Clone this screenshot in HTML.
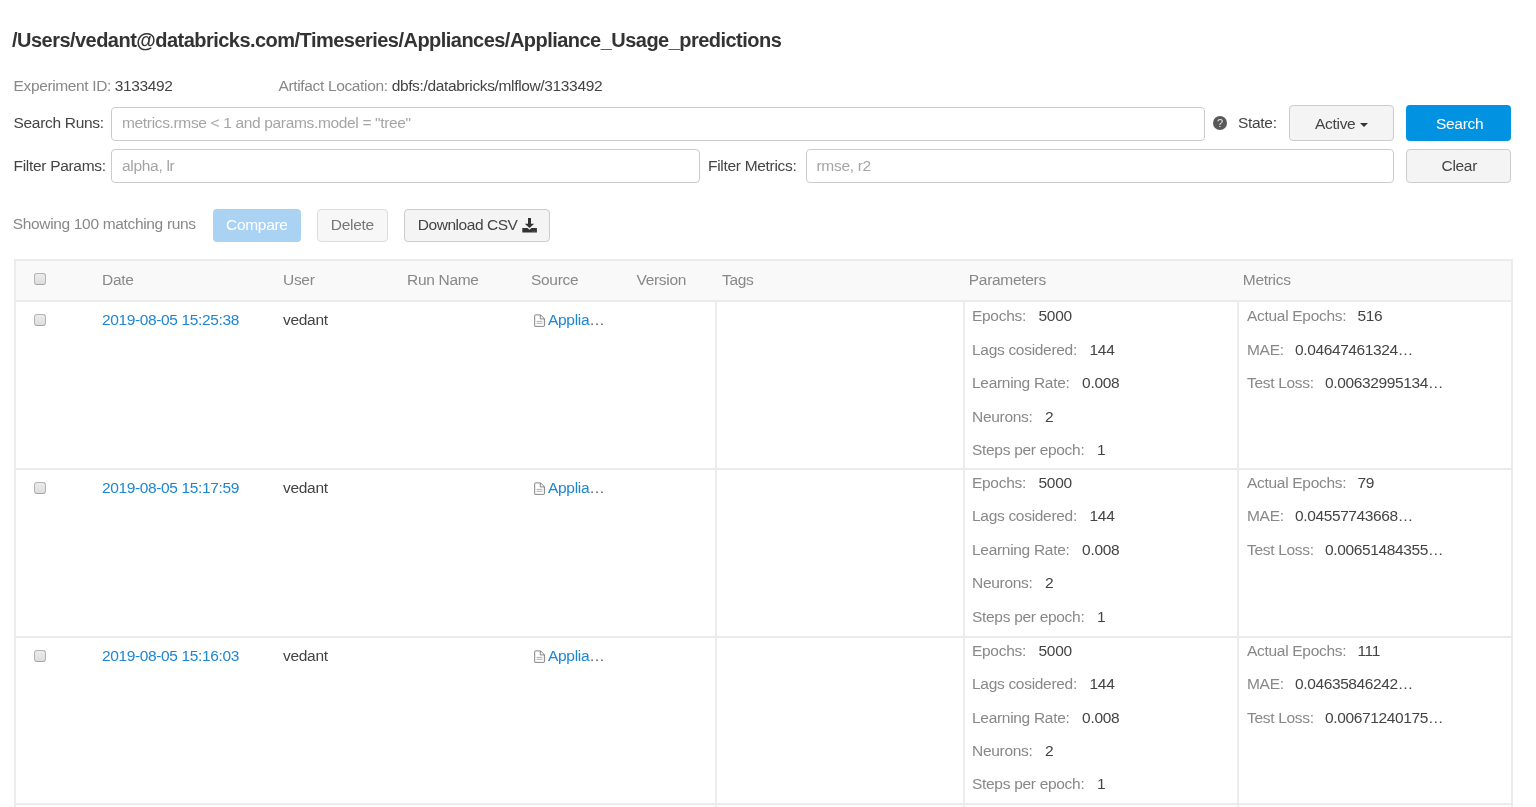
<!DOCTYPE html>
<html><head><meta charset="utf-8"><style>
*{margin:0;padding:0;box-sizing:border-box}
html,body{width:1536px;height:807px;overflow:hidden;background:#fff}
body{will-change:transform;font-family:"Liberation Sans",sans-serif;color:#333;position:relative}
.t{position:absolute;white-space:nowrap;font-size:15.50px;letter-spacing:-0.30px;line-height:17px}
.g{color:#888}
.d{color:#444}
.ph{color:#a5a5a5}
.lk{color:#1d86d2}
.box{position:absolute;border:1px solid #ccc;border-radius:4px;background:#fff}
.btn{position:absolute;border:1px solid #ccc;border-radius:4px;background:#f4f4f4}
.hl{position:absolute;height:2px;background:#ebebeb}
.vl{position:absolute;width:2px;background:#ececec}
.cb{position:absolute;width:12px;height:12px;border:1px solid #b4b4b4;border-bottom-color:#a4a4a4;border-radius:3px;background:linear-gradient(#ececec,#dddddd)}
</style></head><body>
<div style="position:absolute;left:12px;top:28.5px;font-size:20px;line-height:22px;letter-spacing:-0.53px;font-weight:bold;color:#333;white-space:nowrap">/Users/vedant@databricks.com/Timeseries/Appliances/Appliance_Usage_predictions</div>
<div class="t " style="left:13.60px;top:76.63px;letter-spacing:-0.37px"><span class="g">Experiment ID:</span> <span class="d">3133492</span></div>
<div class="t " style="left:278.50px;top:76.63px;letter-spacing:-0.35px"><span class="g">Artifact Location:</span> <span class="d">dbfs:/databricks/mlflow/3133492</span></div>
<div class="t d" style="left:13.50px;top:114.43px;">Search Runs:</div>
<div class="box" style="left:111px;top:107px;width:1093.5px;height:33.5px"></div>
<div class="t ph" style="left:122.00px;top:113.53px;letter-spacing:-0.34px">metrics.rmse &lt; 1 and params.model = "tree"</div>
<div style="position:absolute;left:1213px;top:116px;width:14px;height:14px;border-radius:50%;background:#585858;color:#e6e6e6;font-size:11px;line-height:15px;text-align:center;font-weight:normal">?</div>
<div class="t d" style="left:1238.00px;top:114.03px;">State:</div>
<div class="btn" style="left:1289px;top:105px;width:105px;height:35.5px"></div>
<div class="t d" style="left:1315.00px;top:114.93px;">Active</div>
<div style="position:absolute;left:1359.5px;top:122.5px;width:0;height:0;border-left:4px solid transparent;border-right:4px solid transparent;border-top:4px solid #333"></div>
<div style="position:absolute;left:1406px;top:105px;width:105px;height:35.5px;border-radius:4px;background:#0193e1"></div>
<div class="t " style="left:1436.00px;top:114.83px;color:#fff">Search</div>
<div class="t d" style="left:13.50px;top:156.73px;">Filter Params:</div>
<div class="box" style="left:111px;top:149px;width:589px;height:33.5px"></div>
<div class="t ph" style="left:122.00px;top:156.73px;">alpha, lr</div>
<div class="t d" style="left:708.00px;top:156.73px;">Filter Metrics:</div>
<div class="box" style="left:806px;top:149px;width:588px;height:33.5px"></div>
<div class="t ph" style="left:816.50px;top:156.73px;">rmse, r2</div>
<div class="btn" style="left:1406px;top:149px;width:105px;height:33.5px"></div>
<div class="t d" style="left:1441.50px;top:156.53px;">Clear</div>
<div class="t g" style="left:12.70px;top:215.33px;letter-spacing:-0.33px">Showing 100 matching runs</div>
<div style="position:absolute;left:213px;top:208.7px;width:88px;height:33.5px;border-radius:4px;background:#aad3f3"></div>
<div class="t " style="left:226.00px;top:216.33px;color:#fff">Compare</div>
<div class="btn" style="left:317px;top:208.7px;width:70.5px;height:33.5px;background:#f7f7f7;border-color:#ddd"></div>
<div class="t " style="left:330.80px;top:216.33px;color:#777">Delete</div>
<div class="btn" style="left:404px;top:208.7px;width:146px;height:33.5px"></div>
<div class="t d" style="left:417.80px;top:216.33px;letter-spacing:-0.46px">Download CSV</div>
<svg style="position:absolute;left:522px;top:218px" width="15" height="15" viewBox="0 0 15 15"><path d="M6 0h3v5.8h3.2L7.5 10 2.8 5.8H6z" fill="#333"/><path d="M0.3 10.1h5.2l2 1.6 2-1.6h5.4v4.5H0.3z" fill="#333"/><path d="M10.5 13.3h0.8M12.3 13.3h0.8" stroke="#888" stroke-width="0.8"/></svg>
<div style="position:absolute;left:14px;top:259px;width:1498px;height:41.5px;background:#f9f9f9"></div>
<div class="hl" style="left:14px;top:259px;width:1498px"></div>
<div class="hl" style="left:14px;top:300px;width:1498px"></div>
<div class="vl" style="left:14px;top:259px;height:548px"></div>
<div class="vl" style="left:1511px;top:259px;height:548px"></div>
<div class="cb" style="left:34px;top:273px"></div>
<div class="t g" style="left:102.00px;top:271.23px;">Date</div>
<div class="t g" style="left:283.00px;top:271.23px;">User</div>
<div class="t g" style="left:407.00px;top:271.23px;">Run Name</div>
<div class="t g" style="left:531.00px;top:271.23px;">Source</div>
<div class="t g" style="left:636.50px;top:271.23px;">Version</div>
<div class="t g" style="left:722.00px;top:271.23px;">Tags</div>
<div class="t g" style="left:968.80px;top:271.23px;">Parameters</div>
<div class="t g" style="left:1242.80px;top:271.23px;">Metrics</div>
<div class="vl" style="left:715px;top:301px;height:506px"></div>
<div class="vl" style="left:963px;top:301px;height:506px"></div>
<div class="vl" style="left:1237px;top:301px;height:506px"></div>
<div class="cb" style="left:34px;top:314.20px"></div>
<div class="t lk" style="left:102.00px;top:311.43px;letter-spacing:-0.37px">2019-08-05 15:25:38</div>
<div class="t d" style="left:283.00px;top:311.43px;">vedant</div>
<svg style="position:absolute;left:534px;top:313.80px" width="12" height="14" viewBox="0 0 12 14"><path d="M1.2 0.9H6.6L10.4 4.7V11.9Q10.4 12.4 9.9 12.4H1.2Q0.7 12.4 0.7 11.9V1.4Q0.7 0.9 1.2 0.9z" fill="none" stroke="#777" stroke-width="0.9"/><path d="M6.3 1V4.9H10.3" fill="none" stroke="#777" stroke-width="0.9"/><path d="M2.6 7.4H8.4M2.6 9.3H8.4" stroke="#999" stroke-width="0.8"/></svg>
<div class="t " style="left:548.00px;top:311.43px;"><span class="lk">Applia</span><span style="color:#555">…</span></div>
<div class="t " style="left:972.00px;top:307.33px;"><span class="g">Epochs:</span><span class="d" style="margin-left:12.6px">5000</span></div>
<div class="t " style="left:972.00px;top:340.73px;"><span class="g">Lags cosidered:</span><span class="d" style="margin-left:12.6px">144</span></div>
<div class="t " style="left:972.00px;top:374.13px;"><span class="g">Learning Rate:</span><span class="d" style="margin-left:12.6px">0.008</span></div>
<div class="t " style="left:972.00px;top:407.53px;"><span class="g">Neurons:</span><span class="d" style="margin-left:12.6px">2</span></div>
<div class="t " style="left:972.00px;top:440.93px;"><span class="g">Steps per epoch:</span><span class="d" style="margin-left:12.6px">1</span></div>
<div class="t " style="left:1247.00px;top:307.33px;"><span class="g">Actual Epochs:</span><span class="d" style="margin-left:11.3px;letter-spacing:-0.38px">516</span></div>
<div class="t " style="left:1247.00px;top:340.73px;"><span class="g">MAE:</span><span class="d" style="margin-left:11.3px;letter-spacing:-0.38px">0.04647461324…</span></div>
<div class="t " style="left:1247.00px;top:374.13px;"><span class="g">Test Loss:</span><span class="d" style="margin-left:11.3px;letter-spacing:-0.38px">0.00632995134…</span></div>
<div class="hl" style="left:14px;top:468.00px;width:1498px"></div>
<div class="vl" style="left:715px;top:469px;height:338px"></div>
<div class="vl" style="left:963px;top:469px;height:338px"></div>
<div class="vl" style="left:1237px;top:469px;height:338px"></div>
<div class="cb" style="left:34px;top:481.80px"></div>
<div class="t lk" style="left:102.00px;top:479.43px;letter-spacing:-0.37px">2019-08-05 15:17:59</div>
<div class="t d" style="left:283.00px;top:479.43px;">vedant</div>
<svg style="position:absolute;left:534px;top:481.80px" width="12" height="14" viewBox="0 0 12 14"><path d="M1.2 0.9H6.6L10.4 4.7V11.9Q10.4 12.4 9.9 12.4H1.2Q0.7 12.4 0.7 11.9V1.4Q0.7 0.9 1.2 0.9z" fill="none" stroke="#777" stroke-width="0.9"/><path d="M6.3 1V4.9H10.3" fill="none" stroke="#777" stroke-width="0.9"/><path d="M2.6 7.4H8.4M2.6 9.3H8.4" stroke="#999" stroke-width="0.8"/></svg>
<div class="t " style="left:548.00px;top:479.43px;"><span class="lk">Applia</span><span style="color:#555">…</span></div>
<div class="t " style="left:972.00px;top:473.93px;"><span class="g">Epochs:</span><span class="d" style="margin-left:12.6px">5000</span></div>
<div class="t " style="left:972.00px;top:507.33px;"><span class="g">Lags cosidered:</span><span class="d" style="margin-left:12.6px">144</span></div>
<div class="t " style="left:972.00px;top:540.73px;"><span class="g">Learning Rate:</span><span class="d" style="margin-left:12.6px">0.008</span></div>
<div class="t " style="left:972.00px;top:574.13px;"><span class="g">Neurons:</span><span class="d" style="margin-left:12.6px">2</span></div>
<div class="t " style="left:972.00px;top:607.53px;"><span class="g">Steps per epoch:</span><span class="d" style="margin-left:12.6px">1</span></div>
<div class="t " style="left:1247.00px;top:473.93px;"><span class="g">Actual Epochs:</span><span class="d" style="margin-left:11.3px;letter-spacing:-0.38px">79</span></div>
<div class="t " style="left:1247.00px;top:507.33px;"><span class="g">MAE:</span><span class="d" style="margin-left:11.3px;letter-spacing:-0.38px">0.04557743668…</span></div>
<div class="t " style="left:1247.00px;top:540.73px;"><span class="g">Test Loss:</span><span class="d" style="margin-left:11.3px;letter-spacing:-0.38px">0.00651484355…</span></div>
<div class="hl" style="left:14px;top:636.00px;width:1498px"></div>
<div class="vl" style="left:715px;top:637px;height:170px"></div>
<div class="vl" style="left:963px;top:637px;height:170px"></div>
<div class="vl" style="left:1237px;top:637px;height:170px"></div>
<div class="cb" style="left:34px;top:649.60px"></div>
<div class="t lk" style="left:102.00px;top:647.23px;letter-spacing:-0.37px">2019-08-05 15:16:03</div>
<div class="t d" style="left:283.00px;top:647.23px;">vedant</div>
<svg style="position:absolute;left:534px;top:649.60px" width="12" height="14" viewBox="0 0 12 14"><path d="M1.2 0.9H6.6L10.4 4.7V11.9Q10.4 12.4 9.9 12.4H1.2Q0.7 12.4 0.7 11.9V1.4Q0.7 0.9 1.2 0.9z" fill="none" stroke="#777" stroke-width="0.9"/><path d="M6.3 1V4.9H10.3" fill="none" stroke="#777" stroke-width="0.9"/><path d="M2.6 7.4H8.4M2.6 9.3H8.4" stroke="#999" stroke-width="0.8"/></svg>
<div class="t " style="left:548.00px;top:647.23px;"><span class="lk">Applia</span><span style="color:#555">…</span></div>
<div class="t " style="left:972.00px;top:641.73px;"><span class="g">Epochs:</span><span class="d" style="margin-left:12.6px">5000</span></div>
<div class="t " style="left:972.00px;top:675.13px;"><span class="g">Lags cosidered:</span><span class="d" style="margin-left:12.6px">144</span></div>
<div class="t " style="left:972.00px;top:708.53px;"><span class="g">Learning Rate:</span><span class="d" style="margin-left:12.6px">0.008</span></div>
<div class="t " style="left:972.00px;top:741.93px;"><span class="g">Neurons:</span><span class="d" style="margin-left:12.6px">2</span></div>
<div class="t " style="left:972.00px;top:775.33px;"><span class="g">Steps per epoch:</span><span class="d" style="margin-left:12.6px">1</span></div>
<div class="t " style="left:1247.00px;top:641.73px;"><span class="g">Actual Epochs:</span><span class="d" style="margin-left:11.3px;letter-spacing:-0.38px">111</span></div>
<div class="t " style="left:1247.00px;top:675.13px;"><span class="g">MAE:</span><span class="d" style="margin-left:11.3px;letter-spacing:-0.38px">0.04635846242…</span></div>
<div class="t " style="left:1247.00px;top:708.53px;"><span class="g">Test Loss:</span><span class="d" style="margin-left:11.3px;letter-spacing:-0.38px">0.00671240175…</span></div>
<div class="hl" style="left:14px;top:803px;width:1498px"></div>
</body></html>
